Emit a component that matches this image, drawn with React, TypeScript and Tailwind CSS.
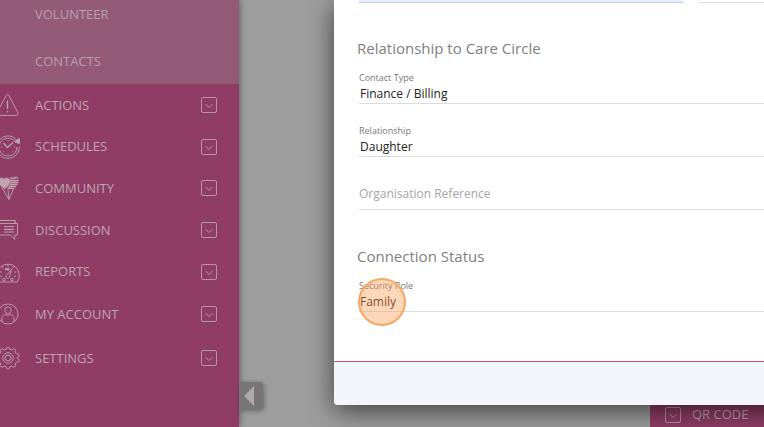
import { useState } from "react";
import type { ReactNode } from "react";

interface MenuItem {
  label: string;
  height: string;
  icon: ReactNode;
}

const menuItems: MenuItem[] = [
  {
    label: "ACTIONS",
    height: "h-[42px]",
    icon: (
      <>
        <path d="M10.2 2.5 1 19.5q-1.1 2.7 1.5 2.9h17.8q2.6-.2 1.5-2.9L12.9 2.5q-1.3-2-2.7 0Z" />
        <path d="M11.5 7.5v8.5M11.5 18v1.6" strokeWidth="1.3" />
      </>
    ),
  },
  {
    label: "SCHEDULES",
    height: "h-[41px]",
    icon: (
      <>
        <path d="M20.8 5.2A11.2 11.2 0 1 0 23.2 12" />
        <path d="M18.9 6.5A8.9 8.9 0 1 0 20.9 12" />
        <path d="m18.5 6.5 4.8 2.3.2-5.3Z" fill="currentColor" />
        <path d="m7.5 8 4 4.6L17 7.5" strokeWidth="1.3" />
        <path d="M12 4.8v1M12 18.3v1M4.800 12h1M18.2 12h1M6.8 17.2l.8-.8M17.2 17.2l-.8-.8" />
      </>
    ),
  },
  {
    label: "COMMUNITY",
    height: "h-[42px]",
    icon: (
      <>
        <path
          d="M8.8 12.5C6 10.7 3.2 8.9 3 5.500 3 2 6.600 1 8.200 3.500c1.500-2.400 5.500-1.600 5.300 1.700 0 3.300-2.200 5.400-4.700 7.300Z"
          fill="currentColor"
        />
        <path d="M0 3c2-1 4 .5 4 2.500S2.500 9.500 0 11Z" fill="currentColor" />
        <path
          d="M14 2.500q1.500-1.200 3.300 0 2.500-1.700 4.700-.5M14 4.500h8.500M14 6.500h8.300M13.500 8.500h8M12.500 10.500h7.500M11.500 12.300h6.500"
          strokeWidth="1.3"
        />
        <path d="m6 11.5 6.800 12L12 13M17.5 13l-4.700 10.500" />
      </>
    ),
  },
  {
    label: "DISCUSSION",
    height: "h-[42px]",
    icon: (
      <>
        <path d="M0 17h14.500l4.200 4.500V17h2.800V5.500H0" />
        <path d="M19 5.500v-3H0M8 8.500h10M8 11.3h10M8 14h10" strokeWidth="1.2" />
      </>
    ),
  },
  {
    label: "REPORTS",
    height: "h-[41px]",
    icon: (
      <>
        <path d="M2.800 22a11.300 11.300 0 1 1 18.400 0Z" />
        <path d="M12 4v2.500M6 6.500l1.500 2M18 6.500l-1.500 2M3.500 12h2.300M18.200 12h2.300M4.200 16.200h2M18 16.200h2" />
        <path d="m15.500 9.500-5 5.500a1.800 1.800 0 1 0 3 1.500l2-7Z" />
        <path d="M9 9.200h4.500" strokeWidth="2" />
        <circle cx="8" cy="19.500" r="1.300" />
        <circle cx="16" cy="19.500" r="1.300" />
      </>
    ),
  },
  {
    label: "MY ACCOUNT",
    height: "h-11",
    icon: (
      <>
        <circle cx="12" cy="12" r="10" />
        <circle cx="12" cy="8.3" r="3.3" />
        <path d="M6.5 19.5c-1.8-4.5.8-7 3.2-6.8q2.300 1 4.600 0c2.400-.2 5 2.300 3.200 6.800" />
      </>
    ),
  },
  {
    label: "SETTINGS",
    height: "h-11",
    icon: (
      <>
        <path d="M10.200 3.300q0-2.300 1.800-2.300t1.800 2.300l2.100.7q1.500-2 3-.9t.2 3l1.300 1.800q2.300-.7 2.800 1t-1.600 2.500v1.200q2.100.8 1.600 2.500t-2.800 1l-1.300 1.800q1.300 1.900-.2 3t-3-.9l-2.100.7q0 2.300-1.800 2.300t-1.800-2.300l-2.100-.7q-1.500 2-3 .9t-.2-3L3.600 16.100q-2.300.7-2.800-1t1.600-2.500v-1.200Q.300 10.600.8 8.900t2.800-1l1.300-1.800q-1.300-1.900.2-3t3 .9Z" />
        <circle cx="12" cy="12" r="5.2" />
        <circle cx="12" cy="12" r="2.9" />
      </>
    ),
  },
];

function DropIcon() {
  return (
    <svg viewBox="0 0 16 16" className="size-4 shrink-0" fill="none" stroke="currentColor" strokeOpacity="0.85">
      <rect x=".5" y=".5" width="15" height="15" rx="1.5" />
      <path d="m4.5 7 3.5 3.5L11.5 7" />
    </svg>
  );
}

function Sidebar() {
  return (
    <nav className="w-[239px] shrink-0 overflow-hidden bg-[#8f3d65] text-[13px] text-[#c0a3b1] shadow-[1px_0_6px_rgba(0,0,0,0.4)]">
      <div className="bg-[#945b77] text-[#b5a0ab]">
        <a href="#volunteer" className="flex h-[30px] items-center pl-[35px]">
          VOLUNTEER
        </a>
        <a href="#contacts" className="flex h-[54px] items-center pt-2.5 pl-[35px]">
          CONTACTS
        </a>
      </div>
      {menuItems.map((item) => (
        <button key={item.label} className={`flex w-full items-center pr-[22px] text-left ${item.height}`}>
          <svg
            viewBox="0 0 24 24"
            className="mr-[15px] -ml-1 size-6 shrink-0"
            fill="none"
            stroke="currentColor"
            strokeWidth="0.9"
            strokeLinejoin="round"
          >
            {item.icon}
          </svg>
          <span className="flex-1 pt-px">{item.label}</span>
          <DropIcon />
        </button>
      ))}
    </nav>
  );
}

interface SelectFieldProps {
  id: string;
  label: string;
  options: string[];
  highlighted?: boolean;
}

function SelectField({ id, label, options, highlighted }: SelectFieldProps) {
  const [value, setValue] = useState(options[0]);

  return (
    <div className="relative">
      <label htmlFor={id} className="block pt-px text-[9px] leading-3 text-[#777]">
        {label}
      </label>
      <select
        id={id}
        value={value}
        onChange={(e) => setValue(e.target.value)}
        className="block h-5 w-full appearance-none border-b border-[#dcdcdc] bg-transparent pt-px pl-px text-[12px] text-[#222]"
      >
        {options.map((option) => (
          <option key={option}>{option}</option>
        ))}
      </select>
      {highlighted && (
        <span className="pointer-events-none absolute -top-px -left-px size-12 rounded-full border-2 border-[#f9a662] bg-[#fa9a50]/40" />
      )}
    </div>
  );
}

function ContactDialog() {
  return (
    <div
      role="dialog"
      aria-label="Contact"
      className="absolute top-0 left-[334px] w-[714px] overflow-hidden rounded-b bg-white shadow-[0_6px_26px_rgba(0,0,0,0.6)]"
    >
      <form className="px-[25px] pb-[49px]">
        <div className="grid grid-cols-2 gap-4">
          <input aria-label="First contact field" className="h-[3px] border-b border-[#c3cde0] bg-[#e8eefb]" />
          <input aria-label="Second contact field" className="h-[3px] border-b border-[#dcdcdc]" />
        </div>

        <h2 className="mt-[33px] -ml-0.5 text-[15px] leading-6 text-[#808080]">Relationship to Care Circle</h2>
        <div className="mt-[11px] space-y-5">
          <SelectField id="contact-type" label="Contact Type" options={["Finance / Billing"]} />
          <SelectField id="relationship" label="Relationship" options={["Daughter"]} />
          <input
            aria-label="Organisation Reference"
            placeholder="Organisation Reference"
            className="block h-[33px] w-full border-b border-[#dcdcdc] text-[12px] placeholder:text-[#a5a5a5]"
          />
        </div>

        <h2 className="mt-[34px] -ml-0.5 text-[15px] leading-6 text-[#808080]">Connection Status</h2>
        <div className="mt-[11px]">
          <SelectField id="security-role" label="Security Role" options={["Family"]} highlighted />
        </div>
      </form>
      <footer className="h-11 border-t border-[#bd5283] bg-[#f3f5fa]" />
    </div>
  );
}

export default function App() {
  return (
    <div className="relative flex min-h-screen overflow-hidden bg-[#9d9d9d] font-['Open_Sans',sans-serif]">
      <Sidebar />
      <main className="flex flex-1 items-end justify-between">
        <button
          aria-label="Collapse menu"
          className="mb-[17px] flex h-7 w-6 items-center justify-center rounded-r bg-[#787476] pr-1 text-[#aaa] shadow-[1px_1px_5px_rgba(0,0,0,0.35)]"
        >
          <svg viewBox="0 0 10 20" className="h-5 w-2.5" fill="currentColor">
            <path d="M10 0v20L0 10Z" />
          </svg>
        </button>
        <button className="flex h-[25px] w-[114px] items-center gap-[11px] bg-[#8f3d65] pl-[15px] text-[13px] text-[#c0a3b1]">
          <DropIcon />
          QR CODE
        </button>
      </main>
      <ContactDialog />
    </div>
  );
}
